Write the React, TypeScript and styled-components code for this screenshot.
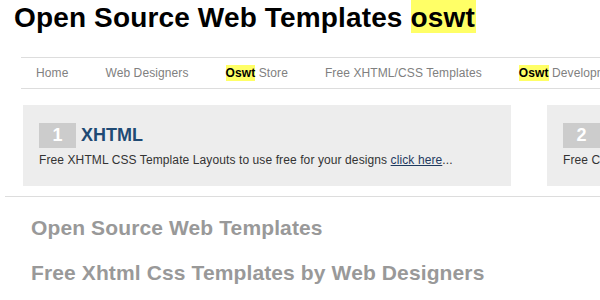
import styled, { createGlobalStyle } from 'styled-components';

const GlobalStyle = createGlobalStyle`
  html, body {
    margin: 0;
    padding: 0;
    overflow: hidden;
    background: #ffffff;
    font-family: "Liberation Sans", Arial, sans-serif;
  }
`;

const navItems = [
  { label: 'Home' },
  { label: 'Web Designers' },
  { mark: 'Oswt', label: 'Store' },
  { label: 'Free XHTML/CSS Templates' },
  { mark: 'Oswt', label: 'Development' },
  { label: 'Contact' },
];

const cards = [
  {
    num: 1,
    title: 'XHTML',
    text: 'Free XHTML CSS Template Layouts to use free for your designs',
  },
  {
    num: 2,
    title: 'CSS',
    text: 'Free CSS Templates to use free for your websites',
  },
];

const App = () => {
  return (
    <Page>
      <GlobalStyle />
      <Title>
        Open Source Web Templates <TitleMark>oswt</TitleMark>
      </Title>
      <Nav>
        {navItems.map((item) => (
          <NavItem key={item.label}>
            {item.mark && <NavMark>{item.mark}</NavMark>}
            {item.mark ? ' ' : ''}
            {item.label}
          </NavItem>
        ))}
      </Nav>
      <CardRow>
        {cards.map((card) => (
          <Card key={card.num}>
            <CardHead>
              <Num>{card.num}</Num>
              <CardTitle>{card.title}</CardTitle>
            </CardHead>
            <CardText>
              {card.text} <More href="#">click here</More>...
            </CardText>
          </Card>
        ))}
      </CardRow>
      <Rule />
      <Heading>Open Source Web Templates</Heading>
      <Heading>Free Xhtml Css Templates by Web Designers</Heading>
    </Page>
  );
};

const Page = styled.div`
  width: 1000px;
`;

const Title = styled.h1`
  margin: 0;
  padding: 2px 0 0 14px;
  font-size: 28px;
  line-height: 31px;
  letter-spacing: 0.15px;
  font-weight: bold;
  color: #000000;
  white-space: nowrap;
`;

const TitleMark = styled.span`
  background: #ffff66;
  padding: 2px 1px 0 0;
`;

const Nav = styled.ul`
  display: flex;
  margin: 24px 0 0 21px;
  padding: 0 0 0 15px;
  list-style: none;
  border-top: 1px solid #dddddd;
  border-bottom: 1px solid #dddddd;
`;

const NavItem = styled.li`
  font-size: 12px;
  line-height: 30px;
  letter-spacing: 0.1px;
  color: #808080;
  margin-right: 37px;
  white-space: nowrap;
`;

const NavMark = styled.span`
  background: #ffff66;
  color: #000000;
  font-weight: bold;
  padding: 1px 0;
`;

const CardRow = styled.div`
  display: flex;
  gap: 36px;
  margin: 16px 0 0 23px;
`;

const Card = styled.div`
  flex-shrink: 0;
  box-sizing: border-box;
  width: 488px;
  height: 81px;
  padding: 18px 16px 0;
  background: #ededed;
`;

const CardHead = styled.div`
  display: flex;
  align-items: center;
  gap: 5px;
`;

const Num = styled.span`
  width: 37px;
  height: 25px;
  line-height: 25px;
  text-align: center;
  background: #cccccc;
  color: #ffffff;
  font-size: 18px;
  font-weight: bold;
`;

const CardTitle = styled.span`
  font-size: 18px;
  font-weight: bold;
  color: #204a74;
`;

const CardText = styled.p`
  margin: 5px 0 0;
  font-size: 12px;
  line-height: 14px;
  letter-spacing: 0.1px;
  color: #333333;
  white-space: nowrap;
`;

const More = styled.a`
  color: #1f3a5f;
  text-decoration: underline;
`;

const Rule = styled.hr`
  margin: 10px 0 0 5px;
  border: 0;
  height: 1px;
  background: #dddddd;
`;

const Heading = styled.h2`
  margin: 19px 0 0 31px;
  font-size: 21px;
  line-height: 24px;
  letter-spacing: 0.12px;
  font-weight: bold;
  color: #999999;

  & + & {
    margin-top: 21px;
  }
`;

export default App;
